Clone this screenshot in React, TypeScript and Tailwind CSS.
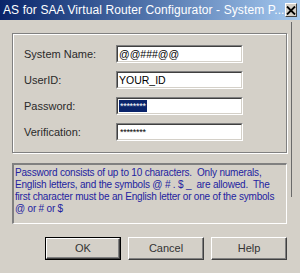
import React from "react";

const font = { fontFamily: '"Liberation Sans", Arial, sans-serif' };

function Field({ label, children }: { label: string; children: React.ReactNode }) {
  return (
    <div className="flex h-[18px] items-center">
      <div className="w-[92px] text-[11px] text-[#2a2a2a] leading-none">{label}</div>
      <div className="relative h-[18px] w-[127px] border-t border-l border-[#808080] border-b border-r border-b-white border-r-white bg-white">
        <div className="absolute inset-0 border-t border-l border-[#404040] border-b border-r border-b-[#d4d0c8] border-r-[#d4d0c8] flex items-center pl-[1px]">
          {children}
        </div>
      </div>
    </div>
  );
}

function Btn({ label, def }: { label: string; def?: boolean }) {
  return (
    <div
      className={
        "flex h-[23px] w-[76px] items-center justify-center text-[11px] text-[#333] " +
        (def ? "border border-black " : "") +
        "bg-[#d4d0c8]"
      }
    >
      <div className="flex h-full w-full items-center justify-center border-t border-l border-white border-b border-r border-b-[#404040] border-r-[#404040] shadow-[inset_-1px_-1px_0_#808080]">
        {label}
      </div>
    </div>
  );
}

export default function App() {
  return (
    <div className="relative h-[273px] w-[300px] overflow-hidden bg-[#d4d0c8]" style={font}>
      <div className="flex h-[20px] items-center justify-between bg-gradient-to-r from-[#0a246a] to-[#a6caf0] pl-[3px] pr-[5px]">
        <span className="text-[12px] tracking-[0.1px] text-white whitespace-nowrap leading-none">
          AS for SAA Virtual Router Configurator - System P...
        </span>
        <div className="flex h-[14px] w-[16px] items-center justify-center bg-[#d4d0c8] border-t border-l border-white border-b border-r border-b-[#404040] border-r-[#404040]">
          <svg width="10" height="9" viewBox="0 0 10 9">
            <path d="M1 0.5 L9 8.5 M9 0.5 L1 8.5" stroke="#000" strokeWidth="1.8" />
          </svg>
        </div>
      </div>

      <div className="absolute left-[291px] top-[22px] h-[175px] w-[1px] bg-[#6a6a6a]" />

      <div className="pl-[12px] pr-[13px] pt-[13px]">
        <div className="flex flex-col gap-[8px] border border-[#808080] pt-[11px] pb-[11px] pl-[11px] shadow-[inset_1px_1px_0_#fff,1px_1px_0_#fff]">
          <Field label="System Name:">
            <span className="text-[10.5px] text-black leading-none">@@###@@</span>
          </Field>
          <Field label="UserID:">
            <span className="text-[10.5px] text-black leading-none">YOUR_ID</span>
          </Field>
          <Field label="Password:">
            <span className="bg-[#0a246a] text-white text-[9px] leading-[12px] h-[12px] px-[1px] tracking-[-0.3px]">
              ********
            </span>
          </Field>
          <Field label="Verification:">
            <span className="text-black text-[9px] leading-[12px] h-[12px] px-[1px] tracking-[-0.3px]">
              ********
            </span>
          </Field>
        </div>

        <div className="mt-[10px] h-[61px] border-t-2 border-l-2 border-[#808080] border-b border-r border-b-white border-r-white pl-[1px] pt-[2px] text-[10px] tracking-[-0.2px] leading-[12px] text-[#2323a0] whitespace-nowrap">
          <div>Password consists of up to 10 characters.&nbsp; Only numerals,</div>
          <div>English letters, and the symbols @ # . $ _&nbsp; are allowed.&nbsp; The</div>
          <div>first character must be an English letter or one of the symbols</div>
          <div>@ or # or $</div>
        </div>

        <div className="mt-[13px] flex justify-end gap-[7px] pr-0">
          <Btn label="OK" def />
          <Btn label="Cancel" />
          <Btn label="Help" />
        </div>
      </div>
    </div>
  );
}
